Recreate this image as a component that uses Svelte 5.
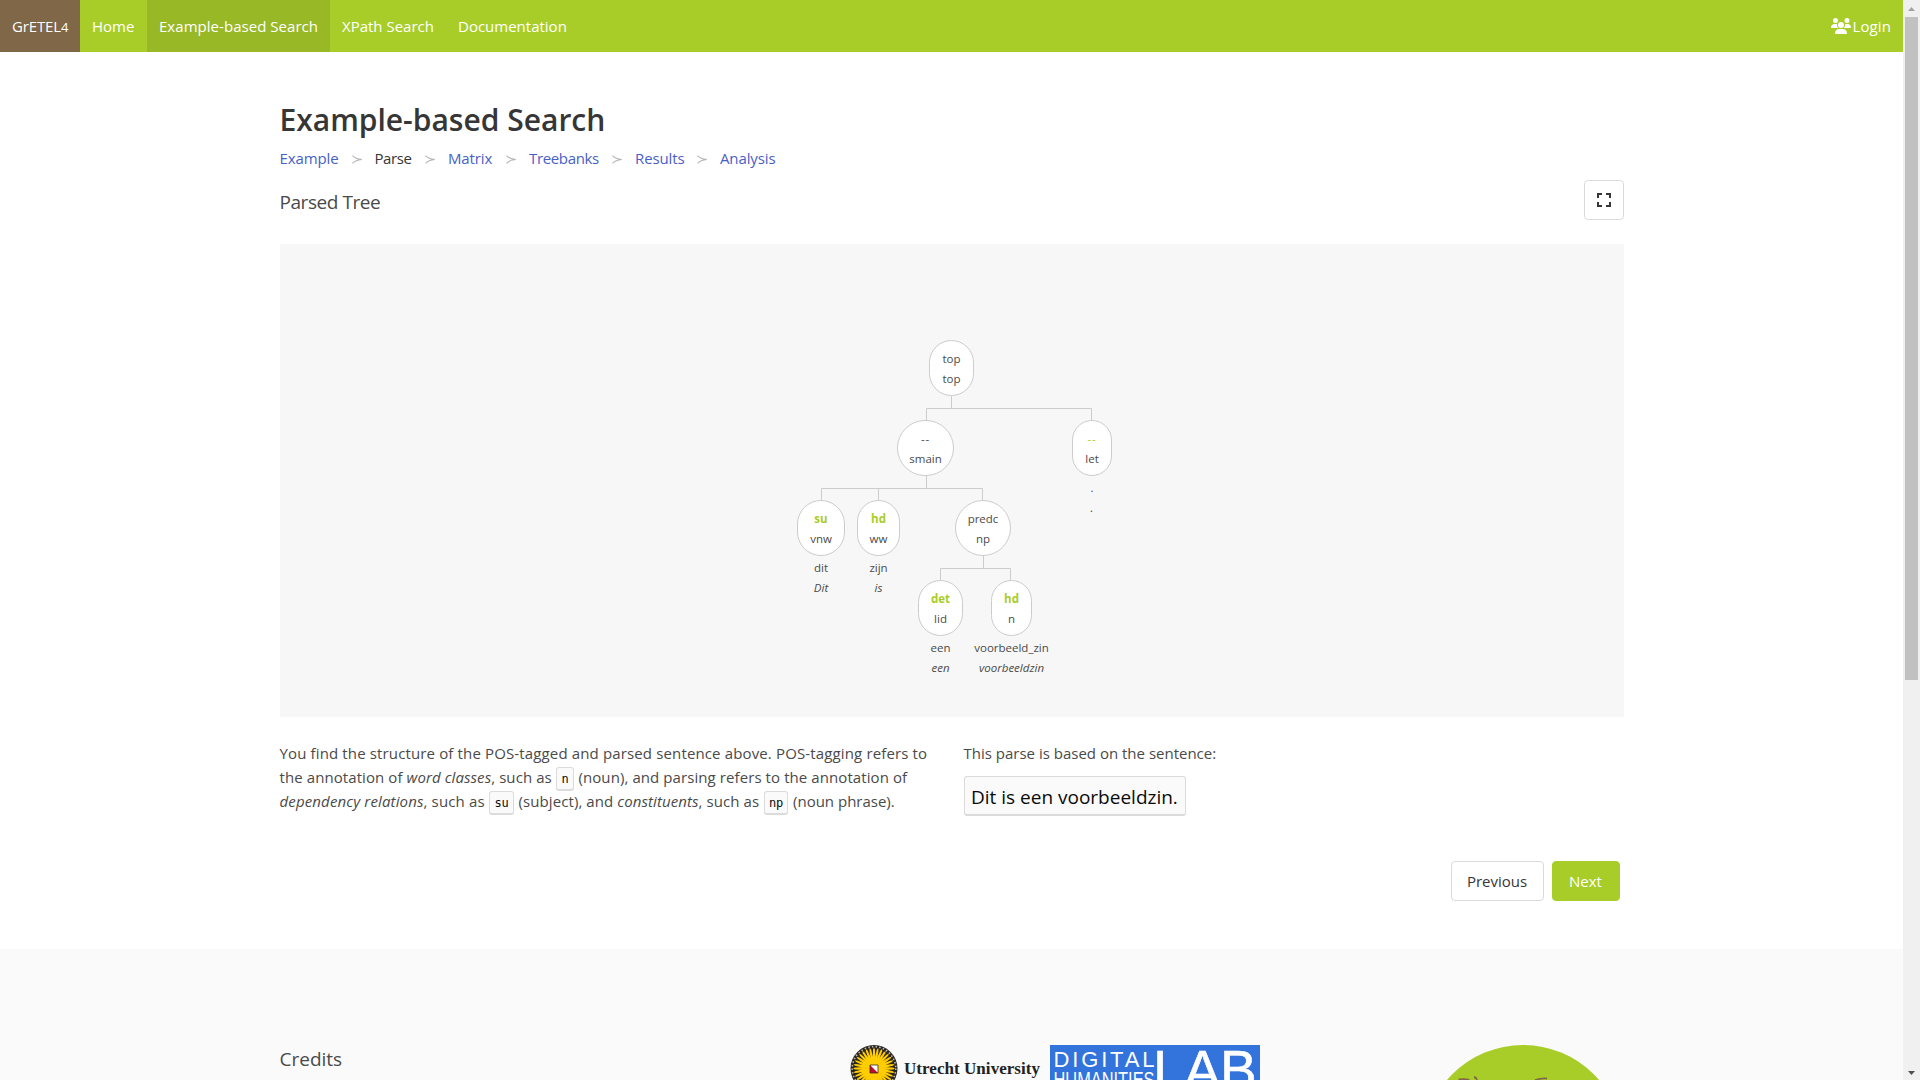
<script>
  const navItems = [
    { label: 'Home', cls: 'home' },
    { label: 'Example-based Search', cls: 'ebs active' },
    { label: 'XPath Search', cls: 'xpath' },
    { label: 'Documentation', cls: 'docs' }
  ];
  const steps = ['Example', 'Parse', 'Matrix', 'Treebanks', 'Results', 'Analysis'];
  const current = 'Parse';

  // Tree nodes: position and size inside the panel
  const nodes = [
    { x: 649, y: 96, w: 45, rel: 'top', cat: 'top' },
    { x: 617, y: 176, w: 57, rel: '--', cat: 'smain' },
    { x: 792, y: 176, w: 40, rel: '--', cat: 'let', leaf: true, lemma: '.', word: '.' },
    { x: 517, y: 256, w: 48, rel: 'su', cat: 'vnw', leaf: true, lemma: 'dit', word: 'Dit' },
    { x: 577, y: 256, w: 43, rel: 'hd', cat: 'ww', leaf: true, lemma: 'zijn', word: 'is' },
    { x: 675, y: 256, w: 56, rel: 'predc', cat: 'np' },
    { x: 638, y: 336, w: 45, rel: 'det', cat: 'lid', leaf: true, lemma: 'een', word: 'een' },
    { x: 711, y: 336, w: 41, rel: 'hd', cat: 'n', leaf: true, lemma: 'voorbeeld_zin', word: 'voorbeeldzin' }
  ];
  const rays = Array.from({ length: 32 }, (_, i) => i * 11.25);
</script>

<div class="page">
  <nav>
    <a class="brand" href="#top"><span>GrETEL<small>4</small></span></a>
    {#each navItems as item}
      <a class={item.cls} href="#top"><span>{item.label}</span></a>
    {/each}
    <a class="login" href="#top">
      <svg width="20" height="16" viewBox="0 0 640 512" fill="#fff">
        <path d="M144 0a80 80 0 1 1 0 160A80 80 0 1 1 144 0zM512 0a80 80 0 1 1 0 160A80 80 0 1 1 512 0zM0 298.700C0 239.800 47.800 192 106.700 192h42.700c15.900 0 31 3.500 44.600 9.700c-1.300 7.200-1.900 14.700-1.900 22.300c0 38.200 16.800 72.500 43.300 96H21.300C9.600 320 0 310.400 0 298.700zM405.300 320h-.7c26.600-23.500 43.300-57.800 43.300-96c0-7.600-.7-15-1.900-22.300c13.600-6.300 28.700-9.700 44.600-9.700h42.700C592.200 192 640 239.800 640 298.700c0 11.800-9.600 21.300-21.300 21.300H405.300zM224 224a96 96 0 1 1 192 0a96 96 0 1 1-192 0zM128 485.300C128 411.700 187.700 352 261.300 352h117.400C452.300 352 512 411.700 512 485.300c0 14.700-11.900 26.700-26.700 26.700H154.700c-14.700 0-26.700-11.900-26.700-26.700z" />
      </svg><span>Login</span>
    </a>
  </nav>

  <main>
    <h1>Example-based Search</h1>
    <ul class="steps">
      {#each steps as step, i}
        <li class={step.toLowerCase()}>
          {#if i > 0}
            <svg class="sep" width="10" height="9" viewBox="0 0 10 9"><path d="M.5.6Q3.500 4 9.800 4.500Q3.500 5 .5 8.400" /></svg>
          {/if}
          <a class:current={step === current} href="#top">{step}</a>
        </li>
      {/each}
    </ul>
    <div class="heading">
      <h2>Parsed Tree</h2>
      <button class="full" aria-label="Full screen">
        <svg width="14" height="14" viewBox="0 0 14 14" fill="#363636"><path d="M0 0h5v2H2v3H0zM9 0h5v5h-2V2H9zM0 9h2v3h3v2H0zM12 9h2v5H9v-2h3z" /></svg>
      </button>
    </div>

    <section class="tree">
      <svg class="links" width="1343" height="473" viewBox="0 0 1343 473">
        <path d="M671.500 152v12M646.500 177V164.500H811.500V177M646.500 232v12M541.500 257V244.500H702.500V257M598.500 244v13M703.500 312v12M660.500 337V324.500H730.500V337" />
      </svg>
      {#each nodes as n}
        <div class="node" style="left:{n.x + 0.5}px;top:{n.y}px;width:{n.w}px">
          <div class="oval"><span class:leaf={n.leaf} class:dashes={n.rel === '--'}>{n.rel}</span><span>{n.cat}</span></div>
          {#if n.leaf}
            <div class="words"><span>{n.lemma}</span><em>{n.word}</em></div>
          {/if}
        </div>
      {/each}
    </section>

    <div class="columns">
      <p class="explain">
        <span class="wide">You find the structure of the POS-tagged and parsed sentence above. POS-tagging refers to</span><br />
        <span class="mid">the annotation of <em>word classes</em>, such as</span> <kbd>n</kbd> <span class="mid">(noun), and parsing refers to the annotation of</span><br />
        <span class="wide"><em>dependency relations</em>, such as</span> <kbd>su</kbd> <span class="mid">(subject), and <em>constituents</em>, such as</span> <kbd>np</kbd> <span>(noun phrase).</span>
      </p>
      <div class="based">
        <p>This parse is based on the sentence:</p>
        <div class="sentence">Dit is een voorbeeldzin.</div>
      </div>
    </div>

    <div class="actions">
      <button class="prev">Previous</button>
      <button class="next">Next</button>
    </div>
  </main>

  <footer>
    <h2>Credits</h2>
    <svg class="logos" width="420" height="35" viewBox="0 0 420 35">
      <circle cx="24" cy="23.500" r="23.500" fill="#2b2620" />
      <circle cx="24" cy="23.500" r="21.800" fill="none" stroke="#bdbab0" stroke-width="1.600" stroke-dasharray="1.500 2.200" />
      <g fill="#ffcd00">
        <circle cx="24" cy="23.500" r="11" />
        {#each rays as r}
          <path d="M22.600 14L23.100 4.500L24 2.500L24.900 4.500L25.400 14z" transform="rotate({r} 24 23.500)" />
        {/each}
      </g>
      <path d="M20 20h8v8h-8z" fill="#fff" />
      <path d="M20 20v8h8z" fill="#c00a35" />
      <path d="M20 20h8v8h-8z" fill="none" stroke="#3a2a20" stroke-width=".8" />
      <text class="uu" x="54" y="29" textLength="136">Utrecht University</text>
      <path d="M200 0h210v35H200z" fill="#3273dc" />
      <g class="lab">
        <text x="203.500" y="21.500" font-size="22" textLength="101">DIGITAL</text>
        <text x="203.500" y="41.500" font-size="22" textLength="101" lengthAdjust="spacingAndGlyphs">HUMANITIES</text>
        <g class="big"><text x="303" y="44">L</text><text x="334" y="44">A</text><text x="370" y="44">B</text></g>
      </g>
    </svg>
    <svg class="badge" width="200" height="35" viewBox="0 0 200 35">
      <circle cx="100" cy="100" r="100" fill="#a9cd28" />
      <path d="M35.500 34.500q6-.8 11 .3M51 32q2.500 .5 3 3M112 35q6-2 12-1.500" fill="none" stroke="#7f6748" stroke-width="1.800" />
    </svg>
  </footer>

  <div class="scrollbar">
    <svg width="17" height="17" viewBox="0 0 17 17"><path d="M5 11L8.500 7L12 11z" fill="#a3a3a3" /></svg>
    <div class="thumb"></div>
    <svg class="down" width="17" height="17" viewBox="0 0 17 17"><path d="M5 8L8.500 12L12 8z" fill="#505050" /></svg>
  </div>
</div>

<style>
  :global(body) { margin: 0; overflow: hidden; }
  .page {
    position: relative; height: 1080px; width: 1920px; overflow: hidden; box-sizing: border-box;
    padding-right: 17px; background: #fff; color: #4a4a4a;
    font: 15px/24px 'Open Sans', 'Noto Sans', sans-serif;
  }
  a { text-decoration: none; color: #485fc7; }
  h1, h2, p, ul { margin: 0; padding: 0; font-weight: 400; }
  nav { display: flex; height: 52px; background: #a9cd28; }
  nav a { display: flex; align-items: center; box-sizing: border-box; padding-left: 12px; color: #fff; white-space: nowrap; }
  .brand { width: 80px; background: #7f6748; letter-spacing: -.15px; }
  .brand small { font-size: 13px; line-height: 1; }
  .home { width: 67px; }
  .ebs { width: 183px; letter-spacing: .04px; }
  .active { background: #98b826; }
  .xpath { width: 116px; }
  .login { margin-left: auto; padding-right: 12px; gap: 2px; letter-spacing: .1px; }
  main { width: 1344px; height: 897px; margin-left: 279.500px; }
  h1 { padding-top: 48px; height: 40px; font-size: 30px; line-height: 40px; font-weight: 600; color: #363636; white-space: nowrap; }
  .steps { display: flex; list-style: none; height: 24px; padding-top: 6px; }
  li { display: flex; align-items: center; white-space: nowrap; letter-spacing: -.12px; }
  .example { width: 59px; }
  .parse { width: 73.500px; letter-spacing: -.4px; }
  .matrix { width: 81px; }
  .treebanks { width: 106px; letter-spacing: -.35px; }
  .results { width: 85px; }
  .sep { flex: none; margin: 2px 13px 0; }
  .sep path { fill: none; stroke: #b5b5b5; stroke-width: 1.100; }
  .current { color: #363636; }
  .heading { display: flex; justify-content: space-between; padding-top: 10px; height: 40px; }
  h2 { font-size: 19px; line-height: 44px; }
  .heading h2 { letter-spacing: -.45px; }
  button { box-sizing: border-box; height: 40px; border: 1px solid #dbdbdb; border-radius: 4px; background: #fff; color: #363636; font: inherit; padding: 0; }
  .full { width: 40px; display: flex; align-items: center; justify-content: center; }
  .tree { position: relative; height: 473px; margin-top: 24px; background: #f7f7f7; font-size: 11.500px; line-height: 20px; }
  .links { display: block; margin-left: .5px; }
  .links path { fill: none; stroke: #ccc; }
  .node { position: absolute; text-align: center; }
  .node span, .node em { display: block; }
  .oval { box-sizing: border-box; height: 56px; padding-top: 8px; border: 1px solid #ccc; border-radius: 28px; background: #fff; }
  .oval .leaf { color: #a9cd28; font-weight: 700; }
  .oval .dashes { font-weight: 400; letter-spacing: .8px; }
  .words { display: flex; flex-direction: column; align-items: center; margin: 2px -20px 0; }
  .columns { display: flex; padding-top: 24px; height: 96px; }
  .explain { width: 684px; white-space: nowrap; }
  .wide { letter-spacing: .14px; }
  .mid { letter-spacing: .085px; }
  kbd {
    display: inline-block; box-sizing: border-box; height: 24px; margin: -4px .7px; padding: 0 4.100px; border: 1px solid #dbdbdb; border-bottom-width: 2px;
    border-radius: 3px; background: #fafafa; color: #0a0a0a; font: 12px/22px 'DejaVu Sans Mono', monospace; letter-spacing: 0;
  }
  .sentence {
    box-sizing: border-box; width: 222px; height: 40px; margin-top: 11px; padding-left: 6.500px; border: 1px solid #dbdbdb; border-bottom-width: 2px;
    border-radius: 3px; background: #fafafa; color: #0a0a0a; font-size: 19px; line-height: 41px; white-space: nowrap;
  }
  .actions { display: flex; justify-content: flex-end; gap: 8px; padding: 24px 4px 0; }
  .prev { width: 93px; }
  .next { width: 68px; border-color: #a9cd28; background: #a9cd28; color: #fff; }
  footer { box-sizing: border-box; display: flex; height: 131px; padding: 96px 0 0 279.500px; background: #fafafa; }
  footer h2 { width: 570.500px; line-height: 28px; }
  .badge { margin-left: 153px; }
  .uu { font: 700 17px 'Liberation Serif', serif; fill: #222; }
  .lab { fill: #fff; font-family: 'Liberation Sans', sans-serif; }
  .big { font-size: 55px; stroke: #fff; stroke-width: .6px; }
  .scrollbar { position: absolute; top: 0; right: 0; width: 17px; height: 1080px; display: flex; flex-direction: column; background: #f0f0f0; }
  .thumb { width: 13px; height: 663px; margin-left: 2px; background: #c1c1c1; }
  .scrollbar svg { flex: none; }
  .down { margin-top: auto; }
</style>
